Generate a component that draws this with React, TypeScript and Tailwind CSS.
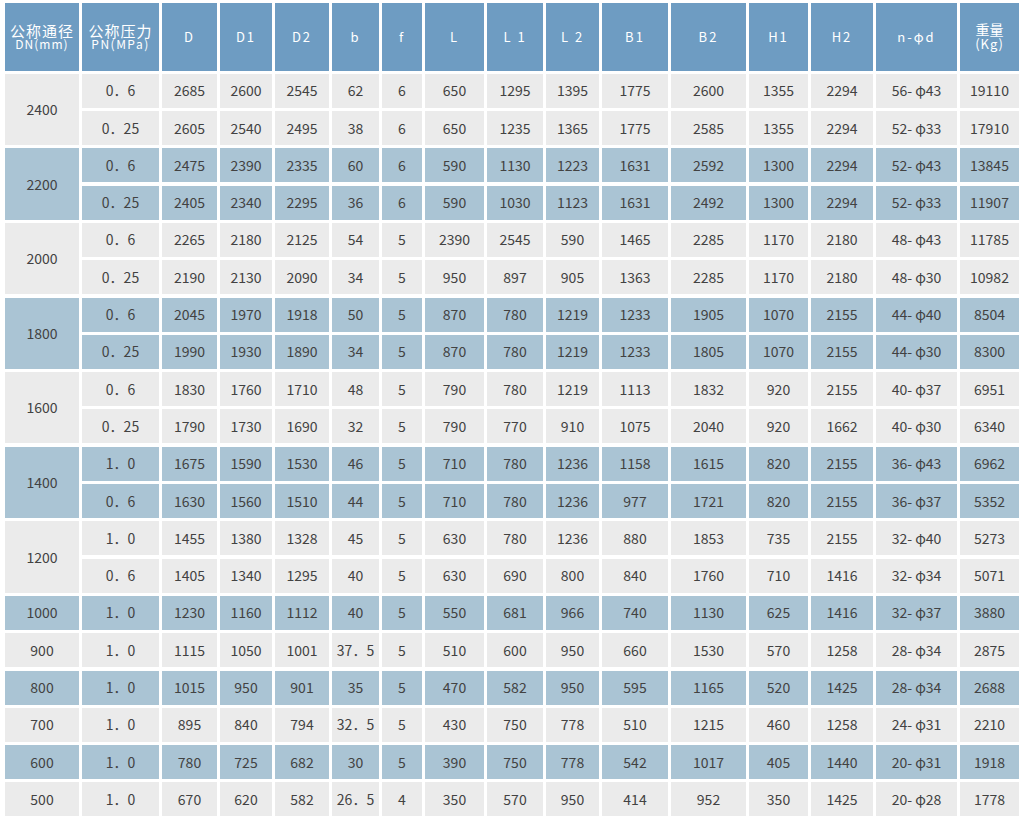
import React from "react";

type Row = string[];

const groups: { dn: string; tone: "grey" | "blue"; rows: Row[] }[] = [
  {
    dn: "2400",
    tone: "grey",
    rows: [
      ["0．6", "2685", "2600", "2545", "62", "6", "650", "1295", "1395", "1775", "2600", "1355", "2294", "56- φ43", "19110"],
      ["0．25", "2605", "2540", "2495", "38", "6", "650", "1235", "1365", "1775", "2585", "1355", "2294", "52- φ33", "17910"],
    ],
  },
  {
    dn: "2200",
    tone: "blue",
    rows: [
      ["0．6", "2475", "2390", "2335", "60", "6", "590", "1130", "1223", "1631", "2592", "1300", "2294", "52- φ43", "13845"],
      ["0．25", "2405", "2340", "2295", "36", "6", "590", "1030", "1123", "1631", "2492", "1300", "2294", "52- φ33", "11907"],
    ],
  },
  {
    dn: "2000",
    tone: "grey",
    rows: [
      ["0．6", "2265", "2180", "2125", "54", "5", "2390", "2545", "590", "1465", "2285", "1170", "2180", "48- φ43", "11785"],
      ["0．25", "2190", "2130", "2090", "34", "5", "950", "897", "905", "1363", "2285", "1170", "2180", "48- φ30", "10982"],
    ],
  },
  {
    dn: "1800",
    tone: "blue",
    rows: [
      ["0．6", "2045", "1970", "1918", "50", "5", "870", "780", "1219", "1233", "1905", "1070", "2155", "44- φ40", "8504"],
      ["0．25", "1990", "1930", "1890", "34", "5", "870", "780", "1219", "1233", "1805", "1070", "2155", "44- φ30", "8300"],
    ],
  },
  {
    dn: "1600",
    tone: "grey",
    rows: [
      ["0．6", "1830", "1760", "1710", "48", "5", "790", "780", "1219", "1113", "1832", "920", "2155", "40- φ37", "6951"],
      ["0．25", "1790", "1730", "1690", "32", "5", "790", "770", "910", "1075", "2040", "920", "1662", "40- φ30", "6340"],
    ],
  },
  {
    dn: "1400",
    tone: "blue",
    rows: [
      ["1．0", "1675", "1590", "1530", "46", "5", "710", "780", "1236", "1158", "1615", "820", "2155", "36- φ43", "6962"],
      ["0．6", "1630", "1560", "1510", "44", "5", "710", "780", "1236", "977", "1721", "820", "2155", "36- φ37", "5352"],
    ],
  },
  {
    dn: "1200",
    tone: "grey",
    rows: [
      ["1．0", "1455", "1380", "1328", "45", "5", "630", "780", "1236", "880", "1853", "735", "2155", "32- φ40", "5273"],
      ["0．6", "1405", "1340", "1295", "40", "5", "630", "690", "800", "840", "1760", "710", "1416", "32- φ34", "5071"],
    ],
  },
  {
    dn: "1000",
    tone: "blue",
    rows: [["1．0", "1230", "1160", "1112", "40", "5", "550", "681", "966", "740", "1130", "625", "1416", "32- φ37", "3880"]],
  },
  {
    dn: "900",
    tone: "grey",
    rows: [["1．0", "1115", "1050", "1001", "37．5", "5", "510", "600", "950", "660", "1530", "570", "1258", "28- φ34", "2875"]],
  },
  {
    dn: "800",
    tone: "blue",
    rows: [["1．0", "1015", "950", "901", "35", "5", "470", "582", "950", "595", "1165", "520", "1425", "28- φ34", "2688"]],
  },
  {
    dn: "700",
    tone: "grey",
    rows: [["1．0", "895", "840", "794", "32．5", "5", "430", "750", "778", "510", "1215", "460", "1258", "24- φ31", "2210"]],
  },
  {
    dn: "600",
    tone: "blue",
    rows: [["1．0", "780", "725", "682", "30", "5", "390", "750", "778", "542", "1017", "405", "1440", "20- φ31", "1918"]],
  },
  {
    dn: "500",
    tone: "grey",
    rows: [["1．0", "670", "620", "582", "26．5", "4", "350", "570", "950", "414", "952", "350", "1425", "20- φ28", "1778"]],
  },
];

const headers = ["D", "D1", "D2", "b", "f", "L", "L 1", "L 2", "B1", "B2", "H1", "H2", "n-φd"];

const toneClass = (tone: "grey" | "blue") =>
  tone === "blue" ? "bg-[#aac4d4]" : "bg-[#ebebeb]";

const App = () => {
  return (
    <div className="bg-white w-[1024px] h-[822px] pt-[3px] pl-[5px] text-[#424242] [font-family:'Noto_Sans_CJK_SC','Noto_Sans',sans-serif]">
      <div className="grid grid-cols-[74px_77px_55px_52px_54px_47px_40px_59px_56px_53px_66px_75px_59px_62px_81px_59px] grid-rows-[67.5px] auto-rows-[34px] gap-x-[3px] gap-y-[3.3px] text-[14px]">
        <div className="bg-[#6e9cc2] text-white flex flex-col items-center justify-center">
          <span className="block text-[15px] leading-[14px] tracking-[1px]">公称通径</span>
          <span className="block text-[12px] leading-[12px] tracking-[1px]">DN(mm)</span>
        </div>
        <div className="bg-[#6e9cc2] text-white flex flex-col items-center justify-center">
          <span className="block text-[15px] leading-[14px] tracking-[1px]">公称压力</span>
          <span className="block text-[12px] leading-[12px] tracking-[1.5px]">PN(MPa)</span>
        </div>
        {headers.map((h) => (
          <div
            key={h}
            className="bg-[#6e9cc2] text-white flex items-center justify-center text-[13px] tracking-[2px]"
          >
            {h}
          </div>
        ))}
        <div className="bg-[#6e9cc2] text-white flex flex-col items-center justify-center">
          <span className="block text-[14px] leading-[15px]">重量</span>
          <span className="block text-[13px] leading-[14px] tracking-[1px]">(Kg)</span>
        </div>

        {groups.map((g) =>
          g.rows.map((r, ri) => (
            <React.Fragment key={g.dn + ri}>
              {ri === 0 && (
                <div
                  className={`${toneClass(g.tone)} flex items-center justify-center ${
                    g.rows.length === 2 ? "row-span-2" : ""
                  }`}
                >
                  {g.dn}
                </div>
              )}
              {r.map((c, ci) => (
                <div
                  key={ci}
                  className={`${toneClass(g.tone)} flex items-center justify-center`}
                >
                  {c}
                </div>
              ))}
            </React.Fragment>
          ))
        )}
      </div>
    </div>
  );
};

export default App;
